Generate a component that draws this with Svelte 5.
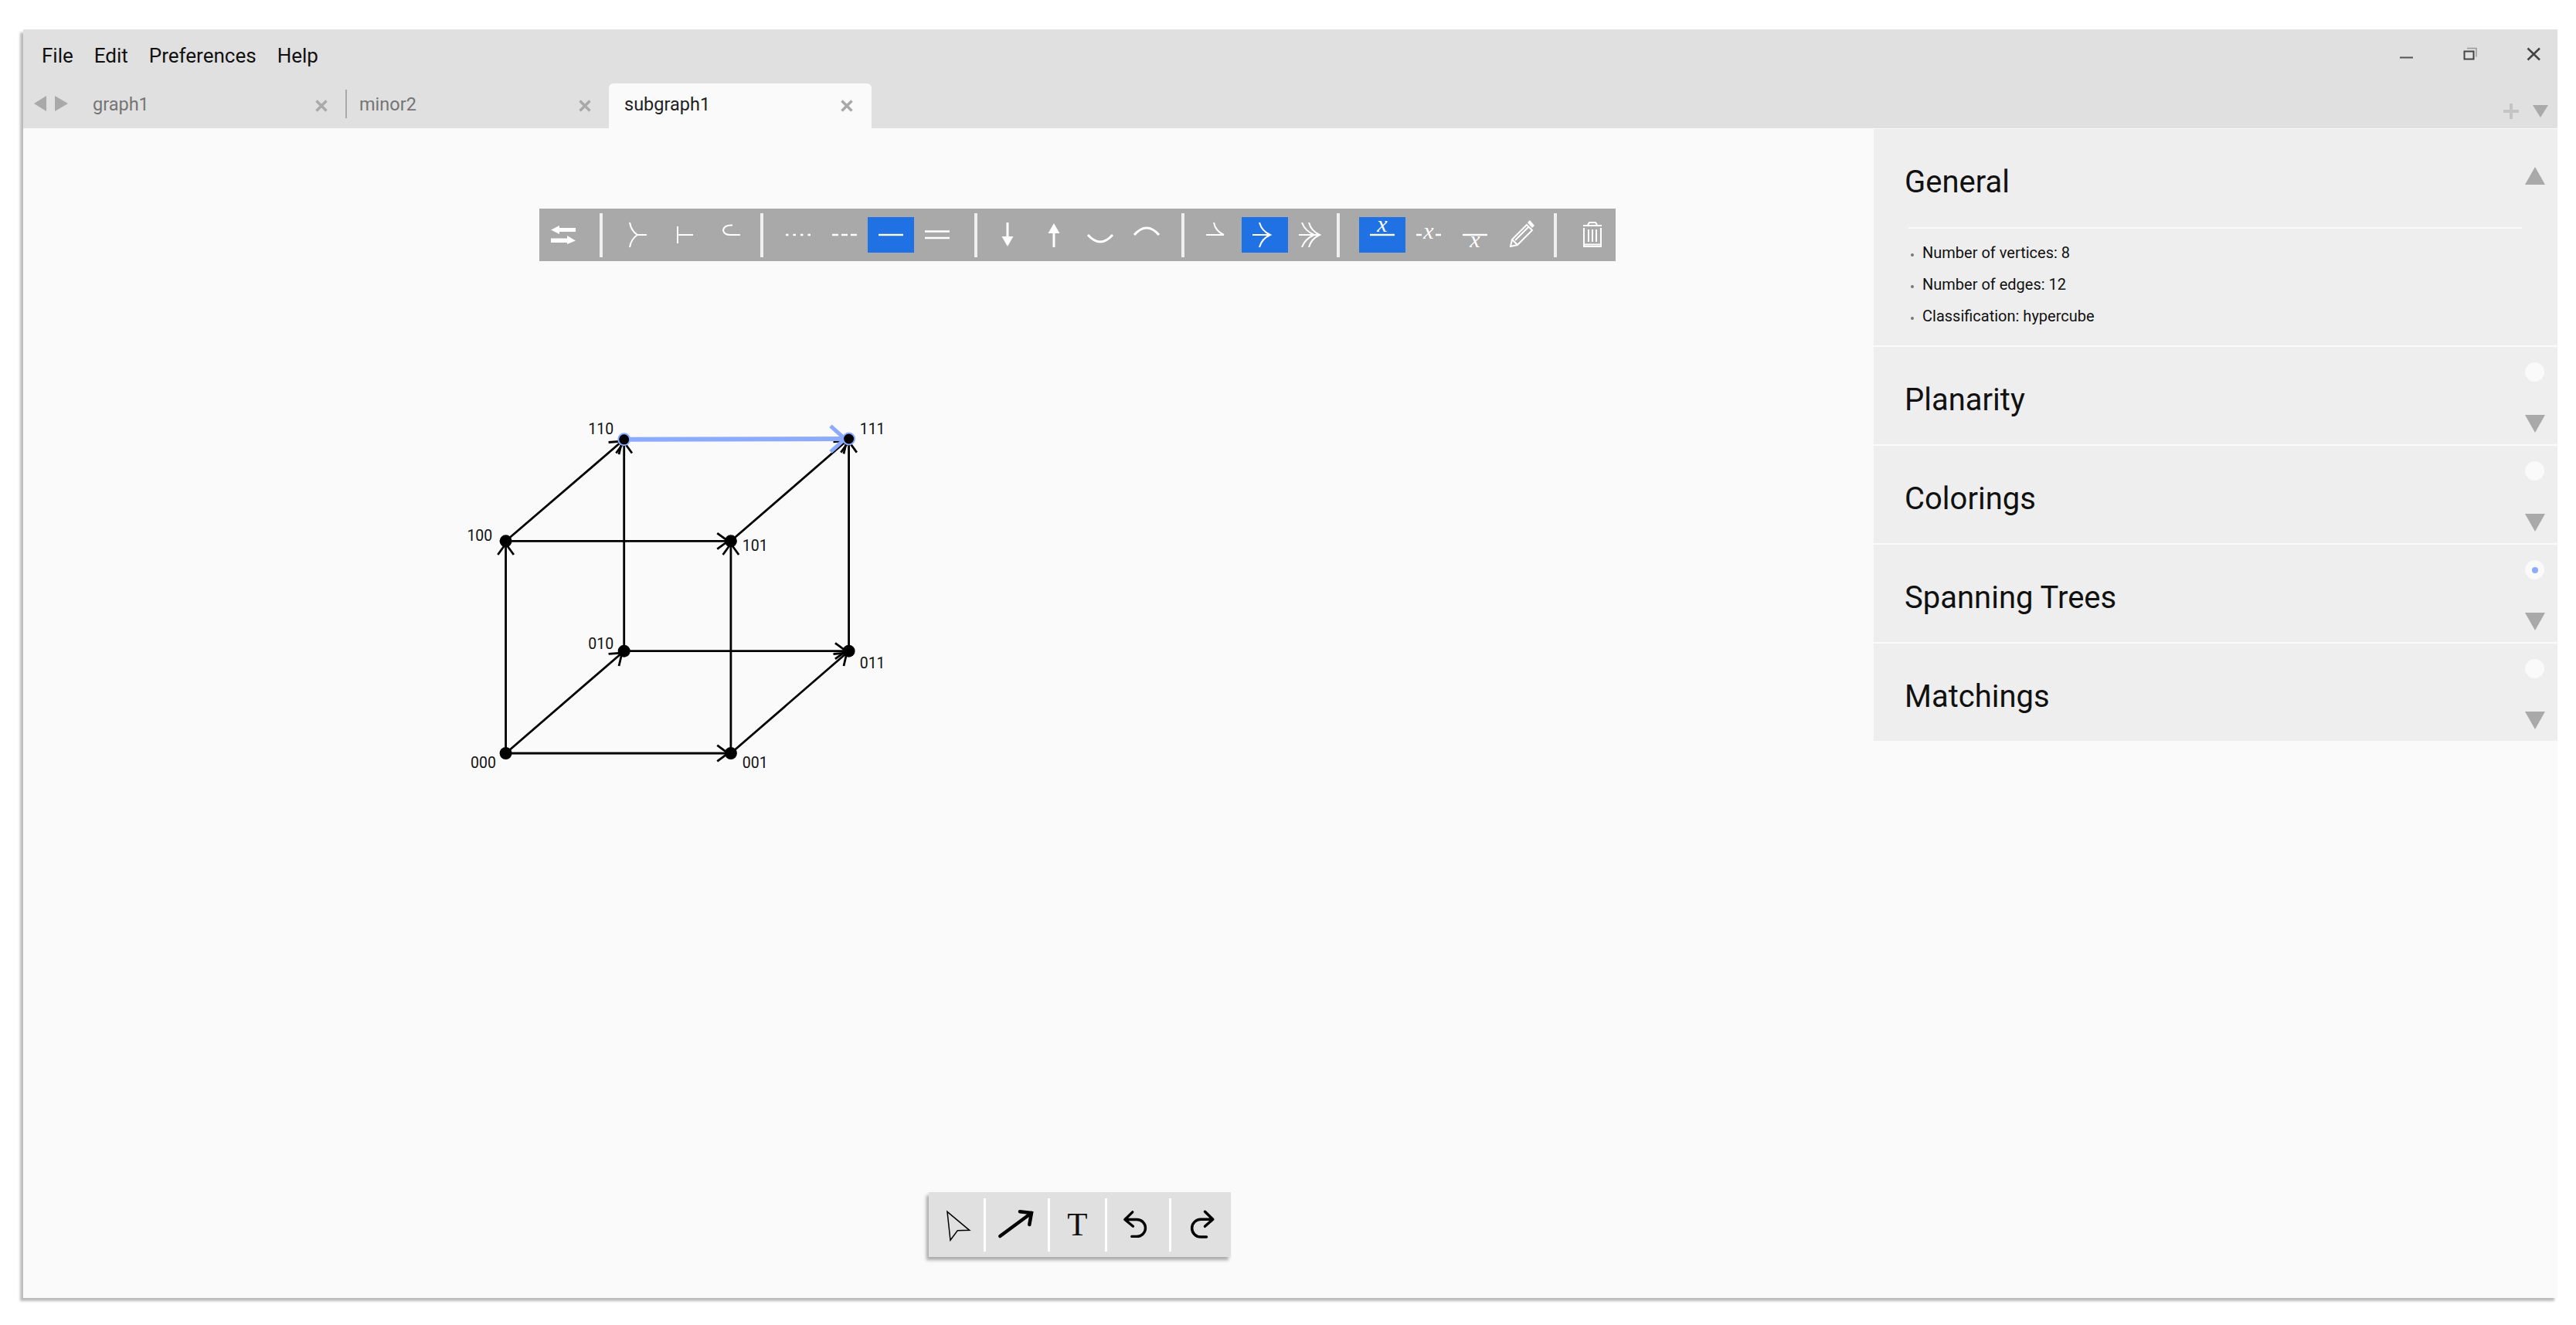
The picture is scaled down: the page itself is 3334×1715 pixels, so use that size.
<script>
  const menus = ['File', 'Edit', 'Preferences', 'Help'];
  const tabs = [
    { name: 'graph1', width: 327 },
    { name: 'minor2', width: 323 },
    { name: 'subgraph1', width: 340, active: true }
  ];

  const sections = [
    { title: 'General', open: true, items: ['Number of vertices: 8', 'Number of edges: 12', 'Classification: hypercube'] },
    { title: 'Planarity' },
    { title: 'Colorings' },
    { title: 'Spanning Trees', selected: true },
    { title: 'Matchings' }
  ];

  // graph coordinates, relative to the canvas corner at (30, 166)
  const pos = {
    '000': [624.6, 809], '001': [915.9, 809],
    '010': [777.7, 676.7], '011': [1068.6, 676.7],
    '100': [624.6, 534.3], '101': [915.9, 534.3],
    '110': [777.7, 402.8], '111': [1068.6, 402]
  };
  const labels = [
    ['000', 579, 828.3], ['001', 930.8, 828.3],
    ['010', 731.3, 674], ['011', 1082.7, 699],
    ['100', 574.4, 534], ['101', 930.8, 547.3],
    ['110', 731.3, 395.7], ['111', 1082.7, 395.7]
  ];
  const edges = [
    ['000', '001'], ['000', '010'], ['000', '100'],
    ['001', '011'], ['001', '101'],
    ['010', '011'], ['010', '110'],
    ['011', '111'],
    ['100', '101'], ['100', '110'],
    ['101', '111']
  ];

  function arrowHead(a, b, back, arm, deg) {
    const [x1, y1] = pos[a];
    const [x2, y2] = pos[b];
    const len = Math.hypot(x2 - x1, y2 - y1);
    const dx = (x2 - x1) / len;
    const dy = (y2 - y1) / len;
    const tx = x2 - dx * back;
    const ty = y2 - dy * back;
    const c = Math.cos((deg * Math.PI) / 180);
    const s = Math.sin((deg * Math.PI) / 180);
    const ax = tx + (-dx * c + dy * s) * arm;
    const ay = ty + (-dy * c - dx * s) * arm;
    const bx = tx + (-dx * c - dy * s) * arm;
    const by = ty + (-dy * c + dx * s) * arm;
    return `M${ax} ${ay}L${tx} ${ty}L${bx} ${by}`;
  }
</script>

<div class="window">
  <header class="menubar">
    <nav class="menus">
      {#each menus as m}<span>{m}</span>{/each}
    </nav>
    <div class="controls">
      <svg width="220" height="40" viewBox="0 0 220 40">
        <path d="M16 26.5H33" stroke="#555" stroke-width="2" fill="none" />
        <path d="M103 14.5H115V25.5" stroke="#999" stroke-width="1.5" fill="none" />
        <rect x="99.5" y="18.5" width="12" height="10" stroke="#444" stroke-width="2" fill="none" />
        <path d="M181.5 14.5L197 29.5M197 14.5L181.5 29.5" stroke="#444" stroke-width="2.5" fill="none" />
      </svg>
    </div>
  </header>

  <div class="tabbar">
    <div class="nav-arrows">
      <svg width="46" height="20" viewBox="0 0 46 20">
        <path d="M16 0V20L0 10Z" fill="#a9a9a9" />
        <path d="M27 0V20L44 10Z" fill="#a9a9a9" />
      </svg>
    </div>
    {#each tabs as tab, i}
      {#if i === 1}<span class="tab-sep"></span>{/if}
      <div class="tab" class:active={tab.active} style="width: {tab.width}px">
        <span>{tab.name}</span>
        <svg class="tab-x" width="16" height="16" viewBox="0 0 16 16">
          <path d="M1.500 1.500L14.500 14.500M14.500 1.500L1.500 14.500" stroke="#a9a9a9" stroke-width="3.500" fill="none" />
        </svg>
      </div>
    {/each}
    <div class="tab-actions">
      <svg width="60" height="20" viewBox="0 0 60 20">
        <path d="M2 10H22M12 0V20" stroke="#c4c4c4" stroke-width="4" fill="none" />
        <path d="M40 2H60L50 18Z" fill="#a9a9a9" />
      </svg>
    </div>
  </div>

  <main class="content">
    <div class="canvas">
      <div class="edge-bar">
        <button><svg viewBox="0 0 60 46">
          <path d="M14 16.5L25 11V14H46V19H25V22Z" fill="#fff" />
          <path d="M46 30.5L35 24V27.5H14V33H35V35Z" fill="#fff" />
        </svg></button>
        <span class="sep s1"></span>
        <button><svg viewBox="0 0 60 46"><path class="ln" d="M20 7Q22 18 30 23Q22 28 20 39M30 23H42" /></svg></button>
        <button><svg viewBox="0 0 60 46"><path class="ln" d="M22 12V34M22 23H42" /></svg></button>
        <button><svg viewBox="0 0 60 46"><path class="ln" d="M33 10.5Q22 10 21 17Q22 23 30 23H43" /></svg></button>
        <span class="sep s2"></span>
        <button><svg viewBox="0 0 60 46"><path class="ln thick" stroke-dasharray="3.500 6" d="M14 23H46" /></svg></button>
        <button><svg viewBox="0 0 60 46"><path class="ln thick" stroke-dasharray="8 4" d="M14 23H46" /></svg></button>
        <button class="on"><svg viewBox="0 0 60 46"><path class="ln thick" d="M14 23H46" /></svg></button>
        <button><svg viewBox="0 0 60 46"><path class="ln thick" d="M14 18.5H46M14 27H46" /></svg></button>
        <span class="sep s3"></span>
        <button><svg viewBox="0 0 60 46"><path class="ln heavy" d="M30 7V26" /><path d="M22.5 25H37.5L30 38Z" fill="#fff" /></svg></button>
        <button><svg viewBox="0 0 60 46"><path class="ln heavy" d="M30 20V39" /><path d="M22.5 21H37.5L30 8Z" fill="#fff" /></svg></button>
        <button><svg viewBox="0 0 60 46"><path class="ln heavy" d="M14 23Q30 41 46 23" /></svg></button>
        <button><svg viewBox="0 0 60 46"><path class="ln heavy" d="M14 23Q30 5 46 23" /></svg></button>
        <span class="sep s4"></span>
        <button><svg viewBox="0 0 60 46"><path class="ln" d="M14 23H37Q26 18 24 7" /></svg></button>
        <button class="on"><svg viewBox="0 0 60 46"><path class="ln" d="M14 23H37M23 7Q26 18 37 23Q26 28 23 39" /></svg></button>
        <button><svg viewBox="0 0 60 46"><path class="ln" d="M14 23H41M27 7Q30 18 41 23Q30 28 27 39M18 7Q22 18 34 23Q22 28 18 39" /></svg></button>
        <span class="sep s5"></span>
        <button class="on"><svg viewBox="0 0 60 46"><text class="math" x="30" y="19">x</text><path class="ln thick" d="M14 23H46" /></svg></button>
        <button><svg viewBox="0 0 60 46"><text class="math" x="30" y="28">x</text><path class="ln thick" d="M14 23H21M39 23H46" /></svg></button>
        <button><svg viewBox="0 0 60 46"><path class="ln thick" d="M14 23H46" /><text class="math" x="30" y="39">x</text></svg></button>
        <button><svg viewBox="0 0 60 46">
          <path class="ln" d="M16 38L18 29L37 10L44 17L25 36ZM18 29L25 36M22 30L39 13" />
          <path d="M38 7L41 4L47 11L44 14Z" fill="#fff" />
        </svg></button>
        <span class="sep s6"></span>
        <button><svg viewBox="0 0 60 46">
          <path class="ln" d="M19 11H43M25 10L27 7H35L37 10" />
          <path class="ln" d="M20 14V38H42V14M20 35.5H42M26 16V32M31 16V32M36 16V32" />
        </svg></button>
      </div>

      <svg class="graph" width="1300" height="900" viewBox="0 0 1300 900">
        {#each edges as [a, b]}
          <line x1={pos[a][0]} y1={pos[a][1]} x2={pos[b][0]} y2={pos[b][1]} stroke="#000" stroke-width="2.800" />
          <path d={arrowHead(a, b, 3.5, 17.5, 36)} stroke="#000" stroke-width="2.800" fill="none" />
        {/each}
        <line x1={pos['110'][0]} y1={pos['110'][1]} x2={pos['111'][0]} y2={pos['111'][1]} stroke="#8cabff" stroke-width="6" />
        <path d={arrowHead('110', '111', 5, 25, 42)} stroke="#8cabff" stroke-width="5" fill="none" />
        {#each Object.entries(pos) as [name, p]}
          {#if name === '110' || name === '111'}
            <circle cx={p[0]} cy={p[1]} r="7.5" fill="#000" stroke="#8cabff" stroke-width="2" />
          {:else}
            <circle cx={p[0]} cy={p[1]} r="8" fill="#000" />
          {/if}
        {/each}
        {#each labels as [text, x, y]}
          <text class="node-label" {x} {y}>{text}</text>
        {/each}
      </svg>

      <div class="draw-bar">
        <button class="b1"><svg viewBox="0 0 71 84"><path d="M24 25.300L52.700 49.300L37.300 49.700L28 62.300Z" fill="none" stroke="#000" stroke-width="1.500" /></svg></button>
        <span class="dsep"></span>
        <button class="b2"><svg viewBox="0 0 80 84"><path d="M18.300 57L59 27M44 25.300L59 27L56.300 42" fill="none" stroke="#000" stroke-width="4.500" stroke-linecap="round" /></svg></button>
        <span class="dsep"></span>
        <button class="b3"><span>T</span></button>
        <span class="dsep"></span>
        <button class="b4"><svg viewBox="0 0 83 84"><path d="M34 25.300L23.700 35.300L34.700 44.300M24 35.300H40A11.350 11.350 0 0 1 40 58H33" fill="none" stroke="#000" stroke-width="3.500" stroke-linecap="round" stroke-linejoin="round" /></svg></button>
        <span class="dsep"></span>
        <button class="b5"><svg viewBox="0 0 80 84"><path d="M43.500 25.300L53.800 35.300L43.500 44.300M53 35.300H38A11.350 11.350 0 0 0 38 58H45.500" fill="none" stroke="#000" stroke-width="3.500" stroke-linecap="round" stroke-linejoin="round" /></svg></button>
      </div>
    </div>

    <aside class="panel">
      {#each sections as s}
        <section class="section" class:open={s.open}>
          <h2>{s.title}</h2>
          {#if s.open}
            <svg class="tri up" width="26" height="23" viewBox="0 0 26 23"><path d="M13 0L26 23H0Z" fill="#a9a9a9" /></svg>
            <hr />
            <ul>
              {#each s.items as item}<li>{item}</li>{/each}
            </ul>
          {:else}
            <span class="radio" class:selected={s.selected}></span>
            <svg class="tri down" width="26" height="23" viewBox="0 0 26 23"><path d="M0 0H26L13 23Z" fill="#a9a9a9" /></svg>
          {/if}
        </section>
      {/each}
    </aside>
  </main>
</div>

<style>
  :global(body) {
    margin: 0;
    min-height: 1715px;
    background: #fff;
  }

  .window {
    box-sizing: border-box;
    display: flex;
    flex-direction: column;
    width: 3280px;
    height: 1642px;
    margin: 0 0 0 30px;
    position: relative;
    top: 38px;
    background: #fafafa;
    box-shadow: -4px 4px 3px #bbb;
    font-family: Roboto, sans-serif;
  }

  .menubar {
    display: flex;
    justify-content: space-between;
    height: 62px;
    background: #e0e0e0;
  }

  .menus {
    display: flex;
    gap: 27px;
    padding: 19px 0 0 24px;
    font-size: 26px;
    line-height: 30px;
    color: #111;
  }

  .controls {
    padding: 10px 0 0 0;
  }

  .controls svg {
    display: block;
    margin-left: auto;
  }

  .tabbar {
    display: flex;
    height: 66px;
    background: #e0e0e0;
  }

  .nav-arrows {
    width: 90px;
    padding: 24px 0 0 14px;
    box-sizing: border-box;
  }

  .nav-arrows svg {
    display: block;
  }

  .tab {
    box-sizing: border-box;
    display: flex;
    justify-content: space-between;
    height: 58px;
    margin-top: 8px;
    padding: 12px 23px 0 0;
    font-size: 23.5px;
    line-height: 30px;
    color: #757575;
  }

  .tab-x {
    margin-top: 9px;
  }

  .tab.active {
    padding-left: 20px;
    padding-right: 24px;
    background: #fafafa;
    color: #222;
    border-radius: 6px 6px 0 0;
  }

  .tab-sep {
    width: 2px;
    height: 37px;
    margin: 16px 16px 0 0;
    background: #a9a9a9;
  }

  .tab-actions {
    margin-left: auto;
    padding: 34px 12px 0 0;
  }

  .content {
    display: flex;
    flex: 1;
    min-height: 0;
  }

  .canvas {
    position: relative;
    flex: 1;
  }

  .graph {
    position: absolute;
    left: 0;
    top: 0;
    pointer-events: none;
  }

  .node-label {
    font-family: Roboto, sans-serif;
    font-size: 19.5px;
    fill: #111;
  }

  .edge-bar {
    position: absolute;
    left: 668px;
    top: 104px;
    display: flex;
    align-items: center;
    height: 68px;
    width: 1393px;
    padding-left: 1px;
    box-sizing: border-box;
    background: #a9a9a9;
  }

  .edge-bar button {
    display: block;
    flex: none;
    width: 60px;
    height: 46px;
    padding: 0;
    border: none;
    background: none;
  }

  .edge-bar button.on {
    background: #2071e3;
  }

  .edge-bar svg {
    display: block;
    width: 60px;
    height: 46px;
  }

  .ln {
    fill: none;
    stroke: #fff;
    stroke-width: 2;
  }

  .ln.thick {
    stroke-width: 2.4;
  }

  .ln.heavy {
    stroke-width: 3;
  }

  .math {
    font-family: 'Liberation Serif', serif;
    font-style: italic;
    font-size: 30px;
    fill: #fff;
    text-anchor: middle;
  }

  .sep {
    flex: none;
    width: 4px;
    height: 57px;
    background: #f0f0f0;
  }

  .s1 { margin: 0 15px 0 17px; }
  .s2 { margin: 0 15px 0 9px; }
  .s3 { margin: 0 9px 0 18px; }
  .s4 { margin: 0 14px 0 15px; }
  .s5 { margin: 0 25px 0 3px; }
  .s6 { margin: 0 15px 0 12px; }

  .draw-bar {
    position: absolute;
    left: 1172px;
    top: 1377px;
    display: flex;
    align-items: center;
    width: 391px;
    height: 84px;
    background: #e0e0e0;
    box-shadow: -3px 4px 4px #a9a9a9;
  }

  .draw-bar button {
    display: flex;
    align-items: center;
    justify-content: center;
    flex: none;
    height: 84px;
    padding: 0;
    border: none;
    background: none;
  }

  .draw-bar svg {
    display: block;
    height: 84px;
    width: 100%;
  }

  .b1 { width: 71px; }
  .b2 { width: 80px; }
  .b3 { width: 71px; }
  .b4 { width: 80px; }
  .b5 { width: 80px; }

  .b3 span {
    font-family: 'Liberation Serif', serif;
    font-size: 43px;
    line-height: 84px;
    color: #111;
  }

  .dsep {
    flex: none;
    width: 3px;
    height: 69px;
    background: #fff;
  }

  .panel {
    flex: none;
    width: 885px;
    margin-top: 1px;
  }

  .section {
    position: relative;
    box-sizing: border-box;
    height: 126px;
    margin-bottom: 2px;
    padding: 0 40px;
    background: #eee;
    overflow: hidden;
  }

  .section.open {
    height: 280px;
  }

  h2 {
    margin: 0;
    padding-top: 46px;
    font-size: 40px;
    font-weight: 400;
    line-height: 46px;
    color: #111;
  }

  hr {
    height: 2px;
    margin: 35px 5px 0 5px;
    border: none;
    background: #fafafa;
    width: 794px;
  }

  ul {
    margin: 11px 0 0 0;
    padding: 0 0 0 23px;
    list-style: disc;
    font-size: 20px;
    line-height: 41px;
    color: #111;
  }

  ul li::marker {
    color: #777;
    font-size: 14px;
  }

  .tri {
    position: absolute;
    right: 16px;
  }

  .tri.up { top: 49px; }
  .tri.down { top: 88px; }

  .radio {
    position: absolute;
    right: 17px;
    top: 20px;
    width: 25px;
    height: 25px;
    border-radius: 50%;
    background: #fafafa;
  }

  .radio.selected::after {
    content: '';
    position: absolute;
    left: 8.500px;
    top: 8.500px;
    width: 8px;
    height: 8px;
    border-radius: 50%;
    background: #8cabff;
  }
</style>
